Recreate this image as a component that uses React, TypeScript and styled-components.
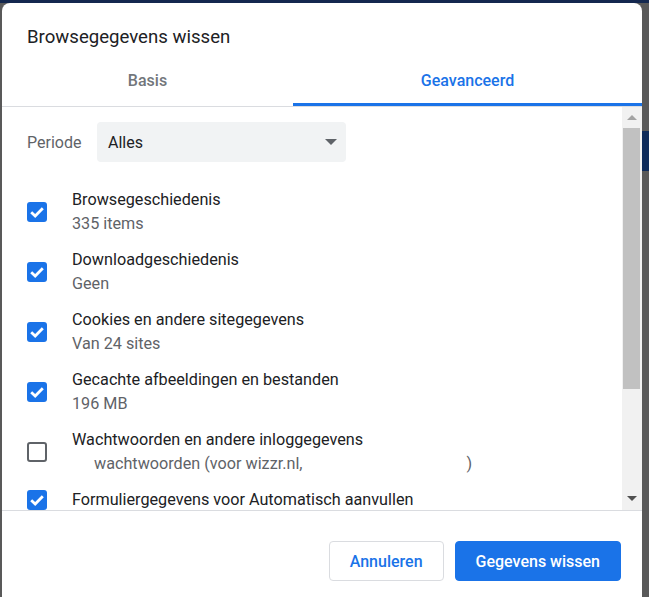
import React from "react";
import styled, { createGlobalStyle } from "styled-components";

const Global = createGlobalStyle`
  html, body { margin: 0; padding: 0; background: #ffffff; }
  body { font-family: Roboto, "Noto Sans", Arial, sans-serif; -webkit-font-smoothing: antialiased; }
`;

const Frame = styled.div`
  width: 649px;
  height: 597px;
  overflow: hidden;
  background: #5b5b5b;
  display: flex;
  flex-direction: column;
`;

const TopBand = styled.div`
  height: 3px;
  flex: none;
  background: #14284f;
`;

const Stage = styled.div`
  flex: 1;
  min-height: 0;
  display: flex;
`;

const SideStrip = styled.div<{ $w: number }>`
  width: ${(p) => p.$w}px;
  flex: none;
  background: #595959;
  display: flex;
  flex-direction: column;
`;

const StripBlock = styled.div<{ $top: number; $h: number }>`
  margin-top: ${(p) => p.$top}px;
  height: ${(p) => p.$h}px;
  background: #0d2a5a;
`;

const Dialog = styled.div`
  width: 640px;
  flex: none;
  background: #ffffff;
  border-radius: 8px 8px 0 0;
  display: flex;
  flex-direction: column;
  overflow: hidden;
`;

const Title = styled.h1`
  margin: 0;
  padding: 22px 25px 0;
  font-size: 18.6px;
  font-weight: 400;
  line-height: 24px;
  color: #202124;
`;

const Tabs = styled.div`
  display: grid;
  grid-template-columns: 291px 1fr;
  border-bottom: 1px solid #dadce0;
`;

const Tab = styled.div<{ $active?: boolean }>`
  padding: 22px 0 12px;
  text-align: center;
  font-size: 16px;
  font-weight: 500;
  line-height: 20px;
  color: ${(p) => (p.$active ? "#1a73e8" : "#72767b")};
  border-bottom: 3px solid ${(p) => (p.$active ? "#1a73e8" : "transparent")};
`;

const Body = styled.div`
  height: 403px;
  flex: none;
  display: flex;
  border-bottom: 1px solid #dadce0;
`;

const Content = styled.div`
  flex: 1;
  overflow: hidden;
  padding: 15px 0 0 25px;
`;

const PeriodRow = styled.div`
  display: flex;
  align-items: center;
  margin-bottom: 20px;
`;

const Label = styled.span`
  width: 70px;
  font-size: 16px;
  color: #5f6368;
`;

const Select = styled.div`
  width: 249px;
  height: 40px;
  box-sizing: border-box;
  background: #f1f3f4;
  border-radius: 4px;
  display: flex;
  align-items: center;
  justify-content: space-between;
  padding: 0 9px 0 11px;
  font-size: 16px;
  color: #202124;
`;

const Caret = styled.span`
  width: 0;
  height: 0;
  border-left: 6px solid transparent;
  border-right: 6px solid transparent;
  border-top: 6px solid #5f6368;
`;

const Item = styled.div`
  display: flex;
  align-items: center;
  gap: 25px;
  padding: 6px 0;
`;

const Box = styled.div<{ $checked: boolean }>`
  width: 20px;
  height: 20px;
  flex: none;
  box-sizing: border-box;
  border-radius: 3px;
  background: ${(p) => (p.$checked ? "#1a73e8" : "#ffffff")};
  border: ${(p) => (p.$checked ? "none" : "2px solid #5f6368")};
  display: flex;
  align-items: center;
  justify-content: center;
`;

const Texts = styled.div`
  display: flex;
  flex-direction: column;
  font-size: 16.2px;
  line-height: 24px;
`;

const ItemTitle = styled.span`
  color: #202124;
`;

const ItemSub = styled.span<{ $indent?: boolean }>`
  color: #5f6368;
  padding-left: ${(p) => (p.$indent ? 22 : 0)}px;
  white-space: nowrap;
`;

const Blank = styled.span<{ $w: number }>`
  display: inline-block;
  width: ${(p) => p.$w}px;
`;

const ScrollBar = styled.div`
  width: 20px;
  flex: none;
  background: #f1f1f1;
  display: flex;
  flex-direction: column;
`;

const ArrowBtn = styled.div<{ $h: number }>`
  height: ${(p) => p.$h}px;
  flex: none;
  display: flex;
  align-items: center;
  justify-content: center;
`;

const ArrowUp = styled.span`
  width: 0;
  height: 0;
  border-left: 5px solid transparent;
  border-right: 5px solid transparent;
  border-bottom: 5px solid #a3a3a3;
`;

const ArrowDown = styled.span`
  width: 0;
  height: 0;
  border-left: 5px solid transparent;
  border-right: 5px solid transparent;
  border-top: 5px solid #505050;
`;

const Thumb = styled.div`
  height: 261px;
  flex: none;
  margin: 0 2px 0 1px;
  background: #c1c1c1;
`;

const Fill = styled.div`
  flex: 1;
`;

const Footer = styled.div`
  display: flex;
  justify-content: flex-end;
  gap: 11px;
  padding: 30px 21px 0;
`;

const Button = styled.button<{ $primary?: boolean }>`
  height: 40px;
  box-sizing: border-box;
  padding: 0 20px;
  border-radius: 4px;
  font-family: Roboto, "Noto Sans", Arial, sans-serif;
  font-size: 16px;
  font-weight: 500;
  cursor: pointer;
  border: 1px solid ${(p) => (p.$primary ? "#1a73e8" : "#dadce0")};
  background: ${(p) => (p.$primary ? "#1a73e8" : "#ffffff")};
  color: ${(p) => (p.$primary ? "#ffffff" : "#1a73e8")};
`;

const Check = () => (
  <svg width="20" height="20" viewBox="0 0 20 20">
    <path d="M4.2 10.2 L8.2 14 L15.8 6.2" fill="none" stroke="#ffffff" strokeWidth="2.8" />
  </svg>
);

type Row = { title: string; sub: React.ReactNode; checked: boolean; indent?: boolean };

const rows: Row[] = [
  { title: "Browsegeschiedenis", sub: "335 items", checked: true },
  { title: "Downloadgeschiedenis", sub: "Geen", checked: true },
  { title: "Cookies en andere sitegegevens", sub: "Van 24 sites", checked: true },
  { title: "Gecachte afbeeldingen en bestanden", sub: "196 MB", checked: true },
  {
    title: "Wachtwoorden en andere inloggegevens",
    sub: (
      <>
        wachtwoorden (voor wizzr.nl,<Blank $w={164} />)
      </>
    ),
    checked: false,
    indent: true,
  },
  { title: "Formuliergegevens voor Automatisch aanvullen", sub: "", checked: true },
];

export default function App() {
  return (
    <>
      <Global />
      <Frame>
        <TopBand />
        <Stage>
          <SideStrip $w={2} />
          <Dialog>
            <Title>Browsegegevens wissen</Title>
            <Tabs>
              <Tab>Basis</Tab>
              <Tab $active>Geavanceerd</Tab>
            </Tabs>
            <Body>
              <Content>
                <PeriodRow>
                  <Label>Periode</Label>
                  <Select>
                    <span>Alles</span>
                    <Caret />
                  </Select>
                </PeriodRow>
                {rows.map((r) => (
                  <Item key={r.title}>
                    <Box $checked={r.checked}>{r.checked && <Check />}</Box>
                    <Texts>
                      <ItemTitle>{r.title}</ItemTitle>
                      <ItemSub $indent={r.indent}>{r.sub}</ItemSub>
                    </Texts>
                  </Item>
                ))}
              </Content>
              <ScrollBar>
                <ArrowBtn $h={21}>
                  <ArrowUp />
                </ArrowBtn>
                <Thumb />
                <Fill />
                <ArrowBtn $h={24}>
                  <ArrowDown />
                </ArrowBtn>
              </ScrollBar>
            </Body>
            <Footer>
              <Button>Annuleren</Button>
              <Button $primary>Gegevens wissen</Button>
            </Footer>
          </Dialog>
          <SideStrip $w={7}>
            <StripBlock $top={128} $h={40} />
          </SideStrip>
        </Stage>
      </Frame>
    </>
  );
}
